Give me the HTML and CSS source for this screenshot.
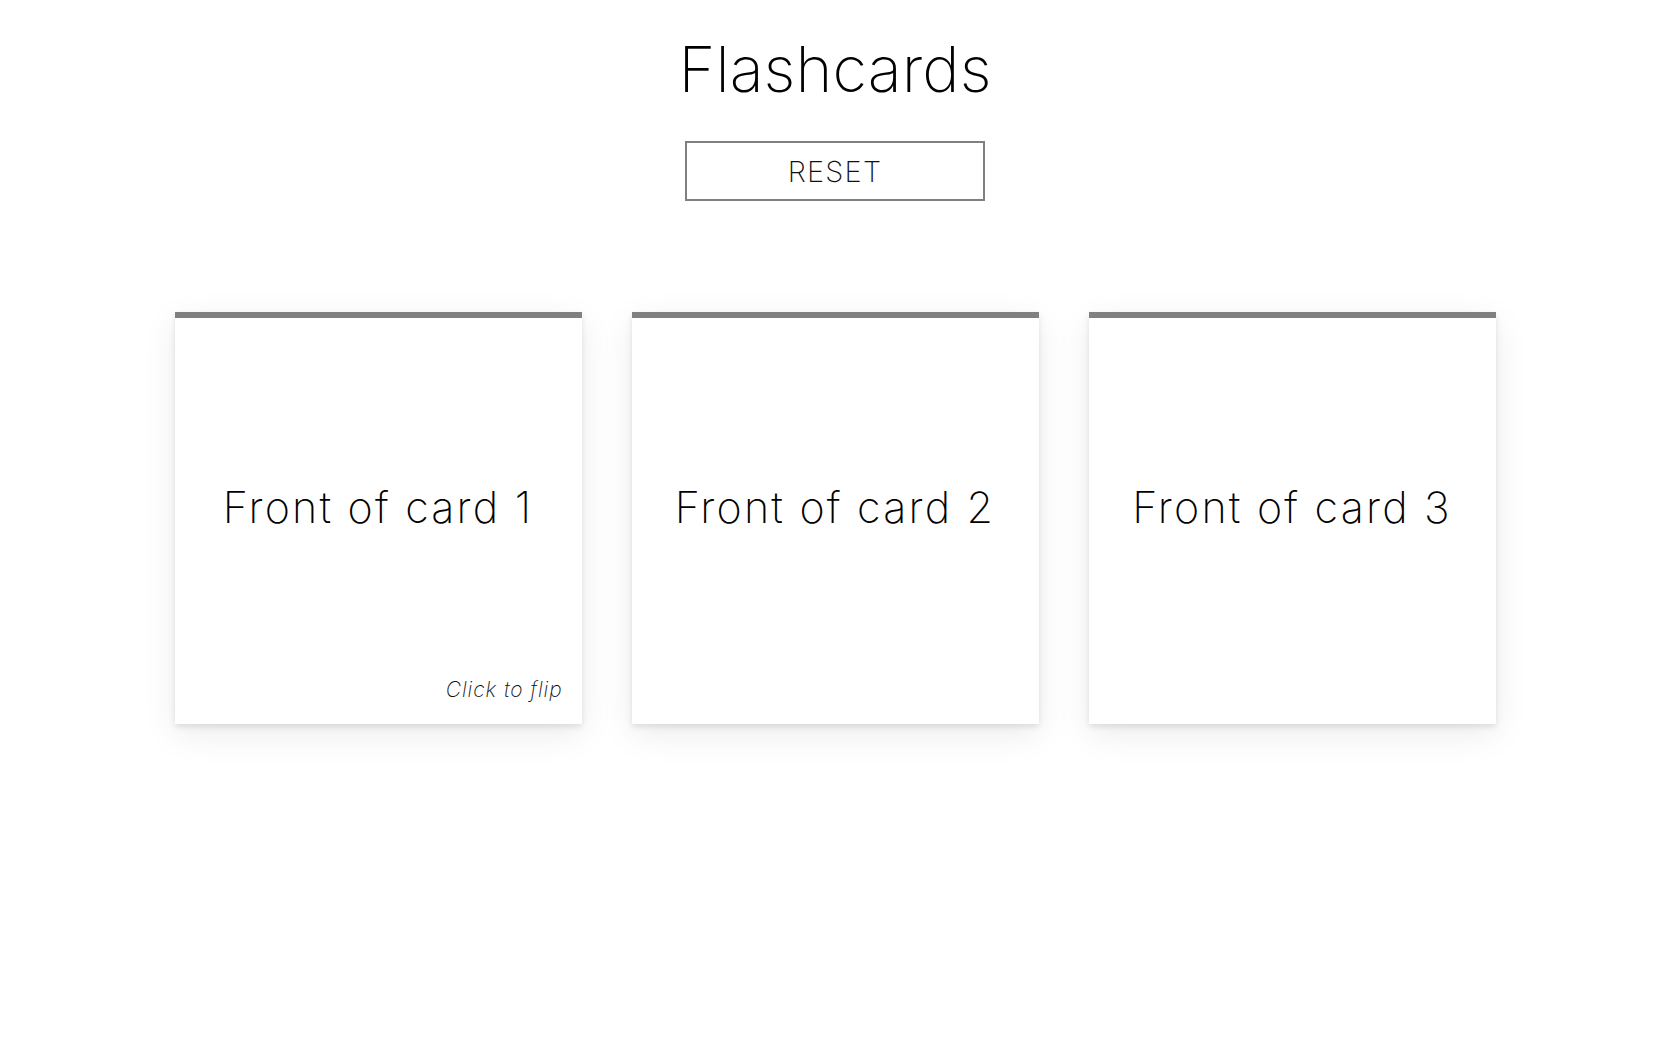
FILE: index.html
```html
<!DOCTYPE html>
<html lang="en">
<head>
<meta charset="utf-8">
<title>Flashcards</title>
<link rel="stylesheet" href="styles.css">
</head>
<body>
<main class="page">
  <h1 class="title">Flashcards</h1>
  <button class="reset">RESET</button>
  <section class="cards">
    <div class="card">
      <div class="card-front">Front of card 1</div>
      <span class="hint">Click to flip</span>
    </div>
    <div class="card">
      <div class="card-front">Front of card 2</div>
    </div>
    <div class="card">
      <div class="card-front">Front of card 3</div>
    </div>
  </section>
</main>
</body>
</html>
```

FILE: styles.css
```css
html, body {
  margin: 0;
  padding: 0;
  background: #fff;
}
body {
  font-family: Inter, "Liberation Sans", sans-serif;
  font-weight: 200;
  color: #000;
}
.page {
  display: flex;
  flex-direction: column;
  align-items: center;
  padding: 31px 10px 120px 0;
}
.title {
  margin: 0;
  font-size: 63px;
  font-weight: 250;
  line-height: 76px;
  color: #000;
  letter-spacing: 0.1px;
}
.reset {
  margin-top: 34px;
  width: 300px;
  height: 60px;
  background: #fff;
  border: 2px solid #808080;
  font-family: Inter, "Liberation Sans", sans-serif;
  font-weight: 250;
  font-size: 29px;
  letter-spacing: 1.2px;
  color: #111;
  padding: 0;
  cursor: pointer;
}
.cards {
  margin-top: 111px;
  display: flex;
  gap: 50px;
}
.card {
  position: relative;
  box-sizing: border-box;
  width: 407px;
  height: 412px;
  border-top: 6px solid #808080;
  background: #fff;
  box-shadow: 0 3px 6px rgba(0,0,0,0.10), 0 10px 32px rgba(0,0,0,0.08);
  display: flex;
  align-items: center;
  justify-content: center;
  padding-bottom: 28px;
}
.card-front {
  font-size: 43px;
  font-weight: 220;
  letter-spacing: 2.2px;
  color: #000;
}
.hint {
  position: absolute;
  right: 19px;
  bottom: 22px;
  font-size: 21px;
  font-style: italic;
  font-weight: 250;
  letter-spacing: 0.9px;
  color: #111;
}
```
